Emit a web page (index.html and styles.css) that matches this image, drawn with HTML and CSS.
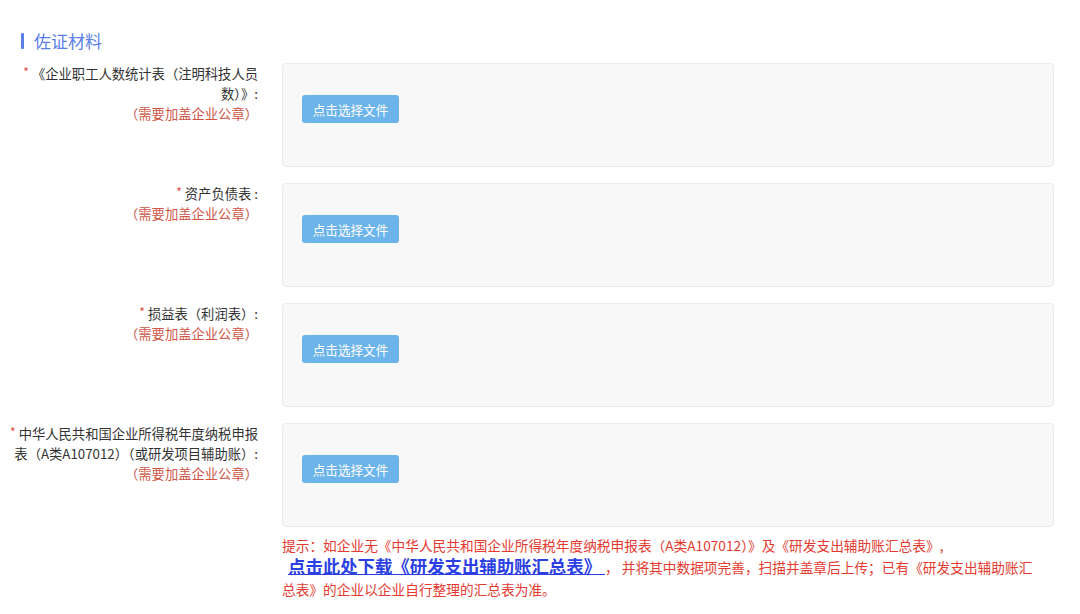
FILE: index.html
```html
<!DOCTYPE html>
<html lang="zh-CN">

<head>
  <meta charset="UTF-8">
  <meta name="viewport" content="width=device-width, initial-scale=1.0">
  <title>佐证材料</title>
  <link rel="stylesheet" href="styles.css">
</head>

<body>
  <div class="page">
    <h3 class="section-title">佐证材料</h3>

    <div class="form-row">
      <div class="form-label">
        <span class="star">*</span>《企业职工人数统计表（注明科技人员数）》:
        <div class="seal">（需要加盖企业公章）</div>
      </div>
      <div class="upload-box">
        <button class="upload-btn">点击选择文件</button>
      </div>
    </div>

    <div class="form-row">
      <div class="form-label">
        <span class="star">*</span>资产负债表 :
        <div class="seal">（需要加盖企业公章）</div>
      </div>
      <div class="upload-box">
        <button class="upload-btn">点击选择文件</button>
      </div>
    </div>

    <div class="form-row">
      <div class="form-label">
        <span class="star">*</span>损益表（利润表）:
        <div class="seal">（需要加盖企业公章）</div>
      </div>
      <div class="upload-box">
        <button class="upload-btn">点击选择文件</button>
      </div>
    </div>

    <div class="form-row">
      <div class="form-label">
        <span class="star">*</span>中华人民共和国企业所得税年度纳税申报表（A类A107012）（或研发项目辅助账）:
        <div class="seal">（需要加盖企业公章）</div>
      </div>
      <div class="upload-box">
        <button class="upload-btn">点击选择文件</button>
      </div>
    </div>

    <p class="tip">
      提示：如企业无《中华人民共和国企业所得税年度纳税申报表（A类A107012）》及《研发支出辅助账汇总表》,<br>
      <a class="download" href="#">点击此处下载《研发支出辅助账汇总表》 </a>， 并将其中数据项完善，扫描并盖章后上传；已有《研发支出辅助账汇总表》的企业以企业自行整理的汇总表为准。
    </p>
  </div>
</body>

</html>
```

FILE: styles.css
```css
body {
  margin: 0;
  background: #fff;
  font-family: "PingFang SC", "Noto Sans CJK SC", "Noto Sans", sans-serif;
  color: #333;
}

.page {
  padding: 31px 0 0 8px;
}

.section-title {
  display: flex;
  align-items: center;
  margin: 0 0 12px 13px;
  font-size: 17px;
  font-weight: normal;
  line-height: 20px;
  color: #5b7fe6;
}

.section-title::before {
  content: "";
  width: 3px;
  height: 16px;
  margin-right: 10px;
  background: #5b7fe6;
  border-radius: 1px;
}

.form-row {
  display: flex;
  gap: 24px;
  margin-bottom: 16px;
}

.form-label {
  width: 250px;
  padding-top: 1px;
  text-align: right;
  font-size: 13.3px;
  line-height: 20px;
}

.star {
  position: relative;
  top: -2px;
  margin-right: 3px;
  font-size: 12px;
  color: #e5473c;
}

.seal {
  color: #cc5545;
}

.upload-box {
  box-sizing: border-box;
  width: 772px;
  height: 104px;
  padding: 31px 0 0 19px;
  background: #f8f8f8;
  border: 1px solid #ebebeb;
  border-radius: 4px;
}

.upload-btn {
  width: 97px;
  height: 28px;
  padding: 0;
  border: 0;
  border-radius: 3px;
  background: #6cb4e9;
  color: #fff;
  font-family: inherit;
  font-size: 12.6px;
  cursor: pointer;
}

.tip {
  width: 760px;
  margin: -9px 0 0 274px;
  font-size: 13.7px;
  line-height: 22px;
  color: #e33b30;
}

.download {
  margin-left: 6px;
  font-size: 17.4px;
  line-height: 20px;
  font-weight: bold;
  color: #2b3fe3;
  text-decoration: underline;
}
```
